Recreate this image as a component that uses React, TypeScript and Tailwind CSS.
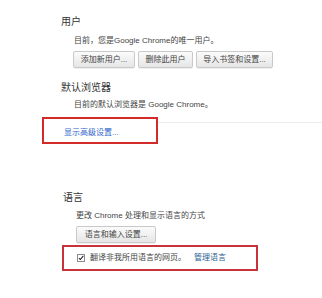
import React from 'react'

const font = "font-['Liberation_Sans','Noto_Sans_CJK_SC',sans-serif]"

function Btn({ label, w }: { label: string; w: string }) {
    return (
        <button
            className={`${w} h-[17px] flex items-center justify-center rounded-[2px] border border-[#c9c9c9] bg-gradient-to-b from-[#fbfbfb] to-[#e6e6e6] text-[8px] leading-[10px] text-[#444] shadow-[0_1px_0_rgba(0,0,0,0.06)]`}
        >
            {label}
        </button>
    )
}

export default function App() {
    return (
        <div className={`w-[322px] h-[298px] bg-white overflow-hidden text-[#333] ${font}`}>
            {/* 用户 */}
            <div className="pl-[61px] pt-[16px]">
                <h3 className="h-[12px] text-[10px] leading-[12px] text-[#333]">用户</h3>
                <div className="pl-[13px] mt-[8px]">
                    <p className="h-[10px] text-[8px] leading-[10px] text-[#444]">
                        目前，您是Google Chrome的唯一用户。
                    </p>
                    <div className="flex gap-[3px] mt-[5px] -ml-[1px]">
                        <Btn label="添加新用户..." w="w-[62px]" />
                        <Btn label="删除此用户" w="w-[55px]" />
                        <Btn label="导入书签和设置..." w="w-[77px]" />
                    </div>
                </div>

                {/* 默认浏览器 */}
                <h3 className="mt-[14px] h-[12px] text-[10px] leading-[12px] text-[#333]">默认浏览器</h3>
                <p className="pl-[13px] mt-[6px] h-[10px] text-[8px] leading-[10px] text-[#444]">
                    目前的默认浏览器是 Google Chrome。
                </p>
            </div>

            {/* 显示高级设置 */}
            <div className="flex mt-[7px] pl-[42px]">
                <div className="w-[116px] h-[27px] border-2 border-[#d42a2a] pl-[20px] pt-[9px]">
                    <a className="block h-[10px] text-[8px] leading-[10px] text-[#3366cc]">显示高级设置...</a>
                </div>
                <div className="flex-1 mt-[5px] border-t border-[#ececec]" />
            </div>

            {/* 语言 */}
            <div className="pl-[62px] mt-[48px]">
                <h3 className="h-[12px] text-[10px] leading-[12px] text-[#333] pl-[1px]">语言</h3>
                <div className="pl-[14px]">
                    <p className="mt-[7px] h-[10px] text-[8px] leading-[10px] text-[#444]">
                        更改 Chrome 处理和显示语言的方式
                    </p>
                    <div className="mt-[5px]">
                        <Btn label="语言和输入设置..." w="w-[80px]" />
                    </div>
                </div>
                <div className="mt-[2px] w-[196px] h-[26px] border-2 border-[#c8323a] flex items-center pl-[13px]">
                    <span className="w-[8px] h-[8px] border border-[#8a8a8a] bg-white flex items-center justify-center">
                        <svg viewBox="0 0 10 10" className="w-[8px] h-[8px]">
                            <path d="M1.5 5.2 L4 7.6 L8.8 1.6" fill="none" stroke="#222" strokeWidth="1.8" />
                        </svg>
                    </span>
                    <span className="ml-[5px] text-[8px] leading-[10px] text-[#444]">翻译非我所用语言的网页。</span>
                    <a className="ml-[8px] text-[8px] leading-[10px] text-[#2a5f8f]">管理语言</a>
                </div>
            </div>
        </div>
    )
}
